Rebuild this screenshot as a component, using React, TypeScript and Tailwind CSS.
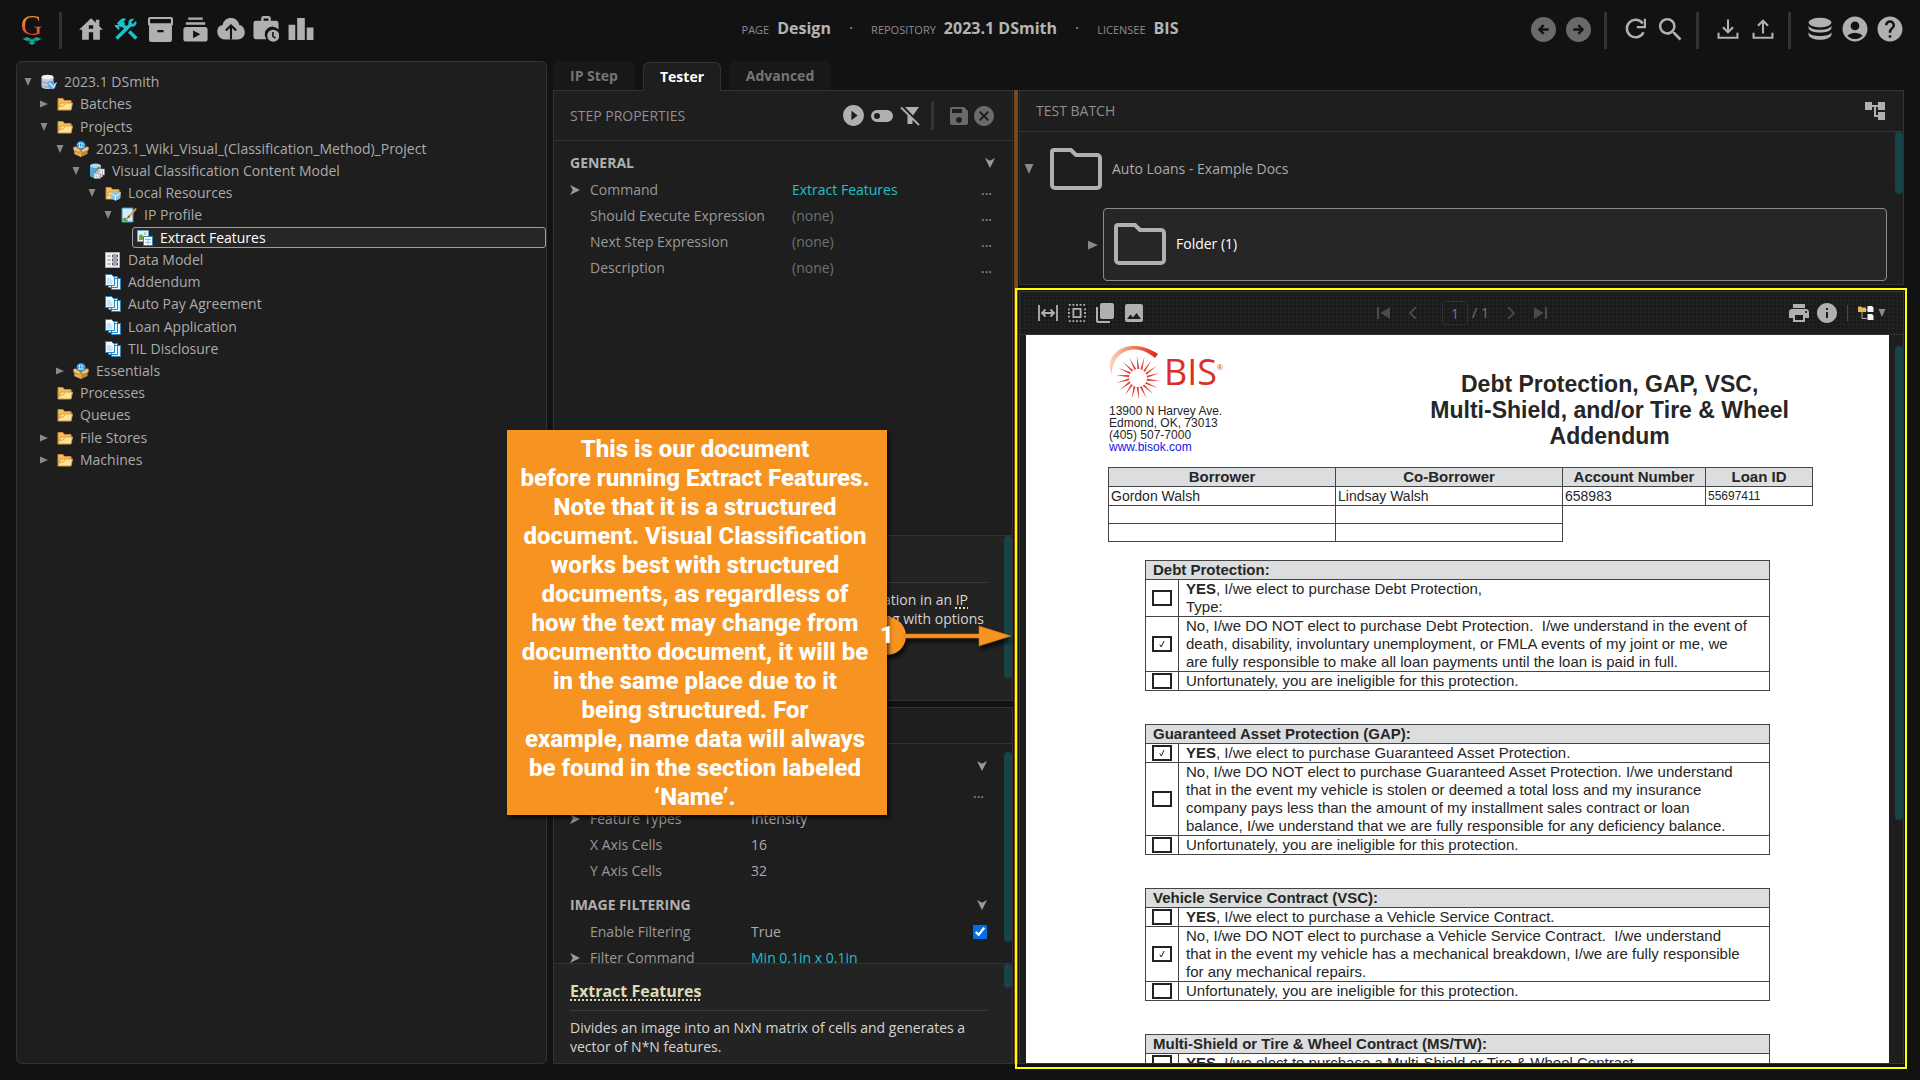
import React from "react";
import {
  MdAccountCircle,
  MdAccountTree,
  MdCancel,
  MdHelp,
  MdImage,
  MdInfo,
  MdPlayCircleFilled,
  MdPrint,
  MdSave,
  MdSearch,
  MdSubscriptions,
} from "react-icons/md";

type IconProps = { className?: string };

const svgProps = { viewBox: "0 0 24 24", fill: "currentColor", "aria-hidden": true };

/* ---------- toolbar icons ---------- */

const HomeIcon = ({ className }: IconProps) => (
  <svg {...svgProps} className={className}>
    <path
      fillRule="evenodd"
      d="M12 2 1 12.6h2.8V22H10v-7h4v7h6.2v-9.4H23l-3.3-3.2V3.4h-3.2v2.9zM10 8.6h4v3.2h-4z"
    />
  </svg>
);

const ToolsIcon = ({ className }: IconProps) => (
  <svg {...svgProps} className={className}>
    <path d="M13.78 15.3L19.78 21.3L21.89 19.14L15.89 13.14L13.78 15.3M17.5 10.1C17.11 10.1 16.69 10.05 16.36 9.91L4.97 21.25L2.86 19.14L10.27 11.74L8.5 9.96L7.78 10.66L6.33 9.25V12.11L5.63 12.81L2.11 9.25L2.81 8.55H5.62L4.22 7.14L7.78 3.58C8.95 2.41 10.83 2.41 12 3.58L9.89 5.74L11.3 7.14L10.59 7.85L12.38 9.63L14.2 7.75C14.06 7.42 14 7 14 6.63C14 4.66 15.56 3.11 17.5 3.11C18.09 3.11 18.61 3.25 19.08 3.53L16.41 6.2L17.91 7.7L20.58 5.03C20.86 5.5 21 6 21 6.63C21 8.55 19.45 10.1 17.5 10.1Z" />
  </svg>
);

const ArchiveIcon = ({ className }: IconProps) => (
  <svg {...svgProps} className={className}>
    <path
      fillRule="evenodd"
      d="M2 0h20a2 2 0 0 1 2 2v6h-1v14a2 2 0 0 1-2 2H3a2 2 0 0 1-2-2V8H0V2a2 2 0 0 1 2-2zm0 2v4h20V2zm7 10.5v2.2h6v-2.2z"
    />
  </svg>
);

const CloudUpIcon = ({ className }: IconProps) => (
  <svg {...svgProps} viewBox="0 0 28 22" className={className}>
    <path d="M14 0C9.600 0 6.200 2.700 5.700 7 2.500 7.400.300 10 .300 13.600.300 18 3.400 21.500 7.600 21.500h13c4 0 7.200-3 7.200-7.200 0-3.800-2.300-6.700-5.500-7.300C21.600 2.700 18.300 0 14 0z" />
    <path d="M14 21.500V8.500M8.800 12.600 14 7.400l5.200 5.200" fill="none" stroke="#121212" strokeWidth="2.100" />
  </svg>
);

const BriefcaseClockIcon = ({ className }: IconProps) => (
  <svg {...svgProps} viewBox="0 0 26 28" className={className}>
    <path fillRule="evenodd" d="M8 5V2.500A2.500 2.500 0 0 1 10.500 0h5A2.500 2.500 0 0 1 18 2.500V5h5.500A2.500 2.500 0 0 1 26 7.500V14a8 8 0 0 0-12.500 10H2.500A2.500 2.500 0 0 1 0 21.500v-14A2.500 2.500 0 0 1 2.500 5zm2.500 0h5V2.500h-5z" />
    <circle cx="20.500" cy="20.500" r="6.300" />
    <path d="M20.200 16.500v4.500l2.600 2" fill="none" stroke="#121212" strokeWidth="1.600" />
  </svg>
);

const BarsIcon = ({ className }: IconProps) => (
  <svg {...svgProps} viewBox="0 0 26 24" className={className}>
    <path d="M0 7h7v16H0zM9 0h8v23H9zM19 10h7v13h-7z" />
  </svg>
);

const ArrowCircleIcon = ({ className }: IconProps) => (
  <svg {...svgProps} className={className}>
    <circle cx="12" cy="12" r="12" />
    <path d="M17 12H8.500M12.200 7.800 8 12l4.200 4.200" fill="none" stroke="#121212" strokeWidth="2.200" />
  </svg>
);

const RefreshIcon = ({ className }: IconProps) => (
  <svg {...svgProps} className={className}>
    <path d="M19.500 15.200A8.700 8.700 0 1 1 18.700 6.500" fill="none" stroke="currentColor" strokeWidth="2.500" />
    <path d="M22 1.800v9.400h-9.200V9h7V1.800z" />
  </svg>
);

const DownloadIcon = ({ className }: IconProps) => (
  <svg {...svgProps} fill="none" stroke="currentColor" strokeWidth="2.300" className={className}>
    <path d="M12 1.500v14M6.500 10l5.500 5.500L17.500 10M1.700 16v5.500h20.600V16" />
  </svg>
);

const UploadIcon = ({ className }: IconProps) => (
  <svg {...svgProps} fill="none" stroke="currentColor" strokeWidth="2.300" className={className}>
    <path d="M12 17V3M6.500 8.500 12 3l5.500 5.500M1.700 16v5.500h20.600V16" />
  </svg>
);

const DatabaseIcon = ({ className }: IconProps) => (
  <svg {...svgProps} className={className}>
    <ellipse cx="12" cy="5.600" rx="11.500" ry="4.800" />
    <path d="M.5 8.800c1.500 2.700 6 4 11.500 4s10-1.300 11.500-4v2.400c-1 3-5.700 4.300-11.500 4.300S1.500 14.200.5 11.200z" />
    <path d="M.5 15.300c1.500 2.700 6 3.800 11.500 3.800s10-1.100 11.500-3.800v2.700c-1 3-5.700 4.800-11.500 4.800S1.500 21 .5 18z" />
  </svg>
);

const ToggleIcon = ({ className }: IconProps) => (
  <svg {...svgProps} viewBox="0 0 22 12" className={className}>
    <path fillRule="evenodd" d="M6 0h10a6 6 0 0 1 0 12H6A6 6 0 0 1 6 0zm0 3a3 3 0 1 0 0 6 3 3 0 0 0 0-6z" />
  </svg>
);

const FilterOffIcon = ({ className }: IconProps) => (
  <svg {...svgProps} viewBox="0 0 20 20" className={className}>
    <path d="M5 1h14l-6 8.500zM7.500 8.500l5 5V18h-5z" />
    <path d="m1 1.500 18 17.500" stroke="currentColor" strokeWidth="1.800" />
  </svg>
);

const FitWidthIcon = ({ className }: IconProps) => (
  <svg {...svgProps} viewBox="0 0 20 18" className={className}>
    <path d="M1 1v16M19 1v16M4 9h12M7.500 5.500 4 9l3.500 3.500M12.500 5.500 16 9l-3.500 3.500" fill="none" stroke="currentColor" strokeWidth="1.800" />
  </svg>
);

const SelectIcon = ({ className }: IconProps) => (
  <svg {...svgProps} viewBox="0 0 20 20" fill="none" stroke="currentColor" strokeWidth="2" className={className}>
    <path d="M1 1h18M1 19h18M1 5v10M19 5v10" strokeDasharray="2 2" />
    <path d="M6 5.500h8v9H6z" />
  </svg>
);

const PagesIcon = ({ className }: IconProps) => (
  <svg {...svgProps} viewBox="0 0 18 20" className={className}>
    <path d="M6 0h10a2 2 0 0 1 2 2v12a2 2 0 0 1-2 2H6a2 2 0 0 1-2-2V2a2 2 0 0 1 2-2z" />
    <path d="M0 4h2v14h12v2H2a2 2 0 0 1-2-2z" />
  </svg>
);

const BigFolderIcon = ({ className }: IconProps) => (
  <svg {...svgProps} viewBox="0 0 52 42" className={className}>
    <path d="M4 2h17l5 5h21a3 3 0 0 1 3 3v27a3 3 0 0 1-3 3H5a3 3 0 0 1-3-3V4a2 2 0 0 1 2-2z" fill="none" stroke="currentColor" strokeWidth="4" />
  </svg>
);

const Notch = ({ className }: IconProps) => (
  <svg viewBox="0 0 10 10" fill="#9a9a9a" aria-hidden="true" className={className}>
    <path d="M0 0 10 5 0 10 2.800 5z" />
  </svg>
);

const Caret = ({ open, className }: { open?: boolean; className?: string }) => (
  <svg viewBox="0 0 8 8" fill="#8a8a8a" aria-hidden="true" className={className}>
    {open ? <path d="M.5 0h7L4 8z" /> : <path d="M0 .5l8 3.500-8 3.500z" />}
  </svg>
);

/* ---------- tree icons ---------- */

const FolderArt = () => (
  <>
    <path d="M1 14V2.500h5l1.500 2H14V7" fill="#f2c061" stroke="#c98a35" />
    <path d="M1 14 3.500 7h12L14 14z" fill="#fbe39b" stroke="#d99a3c" />
    <path d="M3 10.500 6 10l2-2" fill="none" stroke="#e0a444" />
  </>
);

const art: Record<string, React.ReactNode> = {
  folder: <FolderArt />,
  db: (
    <>
      <path d="M.5 3v9.500c0 1.400 2.700 2.500 6 2.500s6-1.100 6-2.500V3z" fill="#c4cbd8" />
      <path d="M.5 7c1 2.500 11 2.500 12 0M.5 11c1 2.300 8 2.500 9 1.500" fill="none" stroke="#8791a5" />
      <ellipse cx="6.500" cy="3" rx="6" ry="2.300" fill="#eef1f6" />
      <ellipse cx="10.500" cy="11" rx="3.500" ry="4.500" fill="#5fa8e6" transform="rotate(-40 10.500 11)" />
      <path d="m8 9 5 4.500M12 14l3.500-5.500" stroke="#d8eaf8" strokeWidth="1.200" />
    </>
  ),
  box: (
    <>
      <path d="M1.500 8 8 6l6.500 2v5L8 16l-6.500-3z" fill="#c48a35" />
      <path d="M1.500 8 8 10.500V16l-6.500-3z" fill="#e2ad55" />
      <circle cx="8" cy="4.400" r="4.400" fill="#2f93dc" />
      <path d="M4.500 3.500 6.500 2l3 .5 2 1.500M5 6h6M6.500 2v4.500M9.500 2.500l-1.500 4" fill="none" stroke="#dff2fd" strokeWidth=".8" />
      <path d="M0 6.500 2.500 5.500 8 9.500 6 11.500.8 9.500zM16 6.500l-2.500-1L8 9.500l2 2 5.200-2z" fill="#f0c478" stroke="#9a671f" strokeWidth=".6" />
    </>
  ),
  model: (
    <>
      <path d="M1 2.500v10C1 14 3.500 15 6.500 15S12 14 12 12.500v-10z" fill="#4fa9d2" />
      <ellipse cx="6.500" cy="2.700" rx="5.500" ry="2.200" fill="#a9dcf0" />
      <path d="M9 6h6.500v6H9zM7 8h6.500v6H7zM5 10h6.500v5.500H5z" fill="#fff" stroke="#8c8c8c" strokeWidth=".7" />
      <path d="m6 7 2-1.500" stroke="#5cab3c" strokeWidth="1.500" />
      <path d="m8.500 5.500 2-1" stroke="#d8443c" strokeWidth="1.500" />
    </>
  ),
  resources: (
    <>
      <FolderArt />
      <path d="m10.500 6.500 5 2v4.500l-5 2.700-5-2.700V8.500z" fill="#8cc3ee" />
      <path d="m5.500 8.500 5 2.500 5-2.500M10.500 11v4.500" fill="none" stroke="#fff" strokeWidth=".8" />
    </>
  ),
  profile: (
    <>
      <path d="M1 1h11v14H1z" fill="#d8ebf7" stroke="#3f8fc4" />
      <path d="M1.500 14.500v-3l3-1 3 4z" fill="#65a845" />
      <path d="m5.500 12 2-3.500L14.500 1l1.300 1.200L9 10z" fill="#ef9a2f" />
      <path d="m7.500 8.500 1.500 1.600-3.500 2z" fill="#6d5030" />
    </>
  ),
  extract: (
    <>
      <path d="M.5.5h11v11H.5z" fill="#dff2fb" stroke="#5fa6cf" />
      <path d="M2 10V6l2-2 3 3 3-1v4z" fill="#6aa744" />
      <circle cx="8" cy="3.500" r="1.300" fill="#f0b73c" />
      <path d="M6.500 6.500h9v9h-9z" fill="#fff" stroke="#2f88bb" />
      <path d="M8 9.500h6M8 12.500h6M11 8v6.500" stroke="#8bbfdc" />
    </>
  ),
  data: (
    <>
      <path d="M.5.500h14v15H.5z" fill="#f2f4f8" stroke="#a5adb9" />
      <path d="M2.500 4h3M2.500 8h3M2.500 12h3" stroke="#777" />
      <path d="M7.500 3h5v2h-5zM7.500 7h5v2h-5zM7.500 11h5v2h-5z" fill="#fff" stroke="#4a5160" />
    </>
  ),
  docs: (
    <>
      <path d="M6.500 4.500h9v11h-9zM3.500 2.500h9v11h-9z" fill="#e9f5fb" stroke="#2a86bd" />
      <path d="M.5.5h6l3 3v8h-9z" fill="#f4fbfe" stroke="#2a86bd" />
      <path d="M2 5h4M2 7h5.500M2 9h5.500" stroke="#9ccbe4" />
    </>
  ),
};

type Node = { label: string; depth: number; icon: string; open?: boolean; selected?: boolean };

const nodes: Node[] = [
  { label: "2023.1 DSmith", depth: 0, icon: "db", open: true },
  { label: "Batches", depth: 1, icon: "folder", open: false },
  { label: "Projects", depth: 1, icon: "folder", open: true },
  { label: "2023.1_Wiki_Visual_(Classification_Method)_Project", depth: 2, icon: "box", open: true },
  { label: "Visual Classification Content Model", depth: 3, icon: "model", open: true },
  { label: "Local Resources", depth: 4, icon: "resources", open: true },
  { label: "IP Profile", depth: 5, icon: "profile", open: true },
  { label: "Extract Features", depth: 6, icon: "extract", selected: true },
  { label: "Data Model", depth: 4, icon: "data" },
  { label: "Addendum", depth: 4, icon: "docs" },
  { label: "Auto Pay Agreement", depth: 4, icon: "docs" },
  { label: "Loan Application", depth: 4, icon: "docs" },
  { label: "TIL Disclosure", depth: 4, icon: "docs" },
  { label: "Essentials", depth: 2, icon: "box", open: false },
  { label: "Processes", depth: 1, icon: "folder" },
  { label: "Queues", depth: 1, icon: "folder" },
  { label: "File Stores", depth: 1, icon: "folder", open: false },
  { label: "Machines", depth: 1, icon: "folder", open: false },
];

/* ---------- header ---------- */

const Separator = ({ className = "" }: IconProps) => <span className={`mt-[3px] h-[37px] w-[3px] shrink-0 bg-[#333] ${className}`} />;

const IconButton = ({ label, className = "", children }: { label: string; className?: string; children: React.ReactNode }) => (
  <button type="button" aria-label={label} className={`flex shrink-0 items-center justify-center ${className}`}>
    {children}
  </button>
);

const NavButton = ({ label, className = "", children }: { label: string; className?: string; children: React.ReactNode }) => (
  <IconButton label={label} className={`w-[35px] ${className}`}>{children}</IconButton>
);

const Crumb = ({ name, value }: { name: string; value: string }) => (
  <span className="flex items-baseline gap-2">
    <span className="text-[11px] text-[#8c8c8c]">{name}</span>
    <span className="text-base font-bold text-[#b4b4b4]">{value}</span>
  </span>
);

const Header = () => (
  <header className="grid h-[61px] shrink-0 grid-cols-[1fr_auto_1fr] items-start px-[13px] pt-[9px] text-[#b0b0b0]">
    <div className="flex items-center pl-2">
      <a href="#home" aria-label="Grooper" className="flex w-[21px] flex-col items-center">
        <span className="bg-gradient-to-b from-[#f7a11c] to-[#e8252c] bg-clip-text font-['Liberation_Serif',serif] text-[30px] leading-6 text-transparent">
          G
        </span>
        <svg viewBox="0 0 20 8" fill="#10a79a" aria-hidden="true" className="h-2 w-5">
          <path d="M5 0l4.500 2L5 4 .500 2zM15 0l4.500 2L15 4l-4.500-2zM10 2l4 2-4 2-4-2zM10 5.300l4 .700-4 2-4-2z" />
        </svg>
      </a>
      <Separator className="ml-[17px] mr-[11px]" />
      <nav className="flex items-center">
        <NavButton label="Home"><HomeIcon className="size-[26px]" /></NavButton>
        <NavButton label="Design" className="text-[#1fc0cc]"><ToolsIcon className="size-7" /></NavButton>
        <NavButton label="Batches"><ArchiveIcon className="size-[25px]" /></NavButton>
        <NavButton label="Tasks"><MdSubscriptions className="size-[29px]" /></NavButton>
        <NavButton label="Imports"><CloudUpIcon className="h-[22px] w-7" /></NavButton>
        <NavButton label="Jobs"><BriefcaseClockIcon className="h-[27px] w-[26px]" /></NavButton>
        <NavButton label="Stats"><BarsIcon className="h-[23px] w-[26px]" /></NavButton>
      </nav>
    </div>

    <div className="flex gap-[18px] pt-[7px]">
      <Crumb name="PAGE" value="Design" />
      <span className="text-[#8c8c8c]">·</span>
      <Crumb name="REPOSITORY" value="2023.1 DSmith" />
      <span className="text-[#8c8c8c]">·</span>
      <Crumb name="LICENSEE" value="BIS" />
    </div>

    <div className="flex items-center justify-end">
      <NavButton label="Back" className="text-[#6a6a6a]"><ArrowCircleIcon className="size-[25px]" /></NavButton>
      <NavButton label="Forward" className="text-[#6a6a6a]"><ArrowCircleIcon className="size-[25px] rotate-180" /></NavButton>
      <Separator className="ml-2 mr-[11px]" />
      <NavButton label="Refresh"><RefreshIcon className="size-6" /></NavButton>
      <NavButton label="Search"><MdSearch className="size-[31px]" /></NavButton>
      <Separator className="ml-2 mr-[11px]" />
      <NavButton label="Download"><DownloadIcon className="size-[22px]" /></NavButton>
      <NavButton label="Upload"><UploadIcon className="size-[22px]" /></NavButton>
      <Separator className="ml-2 mr-[11px]" />
      <NavButton label="Repository"><DatabaseIcon className="size-6" /></NavButton>
      <NavButton label="Account"><MdAccountCircle className="size-[30px]" /></NavButton>
      <NavButton label="Help"><MdHelp className="size-[30px]" /></NavButton>
    </div>
  </header>
);

const NodeTree = () => (
  <aside className="w-[531px] shrink-0 overflow-hidden rounded-md border border-[#333] bg-[#1e1e1e] pt-[9px]">
    <ul className="grid h-[400px] auto-rows-fr text-sm">
      {nodes.map((n) => (
        <li key={n.label} className="flex items-center" style={{ paddingLeft: 7 + n.depth * 16 }}>
          <span className="mr-1 w-2">{n.open !== undefined && <Caret open={n.open} className="size-2" />}</span>
          <button
            type="button"
            className={`flex h-[21px] flex-1 items-center gap-[7px] whitespace-nowrap rounded-[3px] border pl-1 text-left ${
              n.selected ? "border-[#a0a0a0] bg-[#262626] text-white" : "border-transparent text-[#ababab]"
            }`}
          >
            <svg viewBox="0 0 16 16" aria-hidden="true" className="size-4 shrink-0">{art[n.icon]}</svg>
            {n.label}
          </button>
        </li>
      ))}
    </ul>
  </aside>
);

/* ---------- property grids ---------- */

type Row = { label: string; value: string; expand?: boolean; tone?: "link" | "muted"; more?: boolean; check?: boolean };

const stepRows: Row[] = [
  { label: "Command", value: "Extract Features", expand: true, tone: "link", more: true },
  { label: "Should Execute Expression", value: "(none)", tone: "muted", more: true },
  { label: "Next Step Expression", value: "(none)", tone: "muted", more: true },
  { label: "Description", value: "(none)", tone: "muted", more: true },
];

const featureRows: Row[] = [
  { label: "", value: "", more: true },
  { label: "Feature Types", value: "Intensity", expand: true },
  { label: "X Axis Cells", value: "16" },
  { label: "Y Axis Cells", value: "32" },
];

const filterRows: Row[] = [
  { label: "Enable Filtering", value: "True", check: true },
  { label: "Filter Command", value: "Min 0.1in x 0.1in", expand: true, tone: "link" },
];

const tones = { link: "text-[#1fc0cc]", muted: "text-[#707070]", plain: "text-[#ababab]" };

const Group = ({ title, rows, labelWidth }: { title?: string; rows: Row[]; labelWidth: string }) => (
  <section className="pb-[7px]">
    <h3 className="flex h-7 items-center text-sm font-bold text-[#b0b0b0]">
      <span className="flex-1">{title}</span>
      <Notch className="size-[10px] rotate-90" />
    </h3>
    {rows.map((r) => (
      <div key={r.label} className="flex h-[26px] items-center text-sm">
        <span className="w-5">{r.expand && <Notch className="size-[10px]" />}</span>
        <span className={`${labelWidth} text-[#999]`}>{r.label}</span>
        <span className={`flex-1 ${tones[r.tone ?? "plain"]}`}>{r.value}</span>
        {r.more && <button type="button" aria-label={`Edit ${r.label}`} className="pr-[3px] text-[#999]">...</button>}
        {r.check && <input type="checkbox" defaultChecked aria-label={r.label} className="size-[14px] accent-[#0070ea]" />}
      </div>
    ))}
  </section>
);

const Thumb = ({ className }: IconProps) => <span className={`absolute right-0 w-2 rounded bg-[#164448] ${className}`} />;

const Term = ({ children }: { children: React.ReactNode }) => (
  <a href="#help" className="text-[#dcdcb8] underline decoration-dotted decoration-2 underline-offset-2">{children}</a>
);

const Callout = () => (
  <div className="absolute -left-[46px] top-[369px] z-20 w-[380px]">
    <svg viewBox="0 0 150 44" aria-hidden="true" className="absolute left-[359px] top-[184px] h-11 w-[150px] overflow-visible drop-shadow-[2px_4px_2px_rgba(0,0,0,0.7)]">
      <circle cx="21" cy="22" r="19" fill="#f79321" />
      <path d="M38 20h75v-8l32 10-32 10v-8H38z" fill="#f79321" stroke="#c9741a" strokeWidth=".6" />
    </svg>
    <p className="relative bg-[#f79321] pt-[5px] pr-1 pb-[3px] text-center font-['Roboto',sans-serif] text-2xl leading-[29px] font-extrabold whitespace-nowrap text-white shadow-[2px_3px_4px_rgba(0,0,0,0.7)]">
      This is our document<br />
      before running Extract Features.<br />
      Note that it is a structured<br />
      document. Visual Classification<br />
      works best with structured<br />
      documents, as regardless of<br />
      how the text may change from<br />
      documentto document, it will be<br />
      in the same place due to it<br />
      being structured. For<br />
      example, name data will always<br />
      be found in the section labeled<br />
      ‘Name’.
    </p>
    <span className="absolute left-[373px] top-[191px] font-['Roboto',sans-serif] text-2xl leading-[29px] font-extrabold text-white">1</span>
  </div>
);

const StepColumn = () => (
  <div className="relative flex w-[460px] shrink-0 flex-col">
    <div role="tablist" className="flex h-[30px] shrink-0 gap-2 text-sm font-bold">
      <button role="tab" type="button" className="mb-px w-[82px] rounded-t-md bg-[#181818] text-[#757575]">IP Step</button>
      <button role="tab" type="button" aria-selected="true" className="relative z-10 mt-px w-[78px] rounded-t-md border border-b-0 border-[#333] bg-[#1e1e1e] text-white">
        Tester
      </button>
      <button role="tab" type="button" className="mb-px w-[102px] rounded-t-md bg-[#181818] text-[#757575]">Advanced</button>
    </div>

    <section className="-mt-px flex h-[611px] shrink-0 flex-col border border-[#333] bg-[#1e1e1e]">
      <div className="flex h-[50px] shrink-0 items-center border-b border-[#333] pl-4 pr-[18px] text-[#b0b0b0]">
        <h2 className="flex-1 text-sm text-[#8f8f8f]">STEP PROPERTIES</h2>
        <div className="flex items-center gap-[7px]">
          <IconButton label="Execute"><MdPlayCircleFilled className="-mx-0.5 size-[25px]" /></IconButton>
          <IconButton label="Toggle"><ToggleIcon className="h-3 w-[22px]" /></IconButton>
          <IconButton label="Clear filter"><FilterOffIcon className="size-5" /></IconButton>
          <span className="mx-1 h-[29px] w-[3px] bg-[#333]" />
          <IconButton label="Save" className="ml-0.5 text-[#6a6a6a]"><MdSave className="size-6" /></IconButton>
          <IconButton label="Cancel" className="-ml-1.5 text-[#6a6a6a]"><MdCancel className="-mr-0.5 size-6" /></IconButton>
        </div>
      </div>
      <div className="flex-1 pl-4 pr-[17px] pt-2">
        <Group title="GENERAL" rows={stepRows} labelWidth="w-[202px]" />
      </div>
      <div className="relative h-[165px] shrink-0 border-t border-[#333] bg-[#232323] px-4 text-sm leading-[19px] text-[#d4d4d4]">
        <Thumb className="top-0 h-[142px]" />
        <div className="mr-2 h-[47px] border-b border-[#3a3a3a]" />
        <p className="pr-3 pt-[7px] text-right whitespace-nowrap">
          <span className="mr-4">operation in an <Term>IP</Term></span><br />
          processing with options
        </p>
      </div>
    </section>

    <section className="mt-1.5 flex min-h-0 flex-1 flex-col border border-[#333] bg-[#1e1e1e]">
      <div className="h-9 shrink-0 border-b border-[#333]" />
      <div className="relative min-h-0 flex-1 overflow-hidden pl-4 pr-[25px] pt-2">
        <Thumb className="top-2 h-[190px]" />
        <Group rows={featureRows} labelWidth="w-[161px]" />
        <Group title="IMAGE FILTERING" rows={filterRows} labelWidth="w-[161px]" />
      </div>
      <div className="relative h-[100px] shrink-0 border-t border-[#333] bg-[#232323] px-4 text-sm leading-[19px] text-[#d4d4d4]">
        <Thumb className="top-0 h-6" />
        <h3 className="mr-2 flex h-[47px] items-center border-b border-[#3a3a3a] pt-2 text-base leading-5 font-bold">
          <Term>Extract Features</Term>
        </h3>
        <p className="pr-2 pt-[7px]">Divides an image into an NxN matrix of cells and generates a vector of N*N features.</p>
      </div>
    </section>
    <Callout />
  </div>
);

/* ---------- batch + document viewer ---------- */

const TestBatch = () => (
  <section className="h-[195px] shrink-0 overflow-hidden border border-[#333] bg-[#1e1e1e] text-sm">
    <div className="flex h-[41px] items-center justify-between border-b border-[#333] pl-4 pr-4">
      <h2 className="text-[#8f8f8f]">TEST BATCH</h2>
      <IconButton label="Batch tree" className="text-[#b0b0b0]"><MdAccountTree className="size-6" /></IconButton>
    </div>
    <div className="relative flex flex-col gap-0.5 pr-4">
      <Thumb className="top-0 h-[62px]" />
      <div className="flex h-[74px] items-center pl-1 text-[#ababab]">
        <Caret open className="size-[10px]" />
        <BigFolderIcon className="ml-4 mr-[10px] h-[42px] w-[52px] text-[#b0b0b0]" />
        Auto Loans - Example Docs
      </div>
      <div className="flex items-center pl-[68px]">
        <Caret className="size-[10px]" />
        <button type="button" className="ml-[5px] flex h-[73px] flex-1 items-center gap-[10px] rounded border border-[#8a8a8a] bg-[#262626] pb-0.5 pl-[10px] text-white">
          <BigFolderIcon className="h-[42px] w-[52px] text-[#b0b0b0]" />
          Folder (1)
        </button>
      </div>
    </div>
  </section>
);

const ViewerBar = () => (
  <div className="grid h-[43px] shrink-0 grid-cols-[1fr_auto_1fr] items-center border-b border-[#333] bg-[#1a1a1a] bg-[linear-gradient(#212121_1px,transparent_1px),linear-gradient(90deg,#212121_1px,transparent_1px)] bg-size-[4px_4px] pl-[18px] pr-[17px] text-[#b0b0b0]">
    <div className="flex items-center gap-[9px]">
      <IconButton label="Fit width"><FitWidthIcon className="h-[18px] w-5" /></IconButton>
      <IconButton label="Select"><SelectIcon className="h-[18px] w-5" /></IconButton>
      <IconButton label="Pages"><PagesIcon className="h-5 w-[18px]" /></IconButton>
      <IconButton label="Image" className="-ml-px"><MdImage className="size-6" /></IconButton>
    </div>
    <div className="flex items-center gap-[18px] text-sm text-[#777]">
      <IconButton label="First page">
        <svg viewBox="0 0 14 12" fill="#4a4a4a" className="h-3 w-[14px]"><path d="M0 0h2v12H0zM13 0v12L3.500 6z" /></svg>
      </IconButton>
      <IconButton label="Previous page">
        <svg viewBox="0 0 8 12" fill="none" stroke="#4a4a4a" strokeWidth="1.800" className="h-3 w-2"><path d="M7 0 1 6l6 6" /></svg>
      </IconButton>
      <label className="ml-[7px] flex items-center gap-1">
        <input aria-label="Page number" defaultValue="1" className="h-6 w-[26px] rounded border border-[#303030] bg-transparent text-center" />
        / 1
      </label>
      <IconButton label="Next page">
        <svg viewBox="0 0 8 12" fill="none" stroke="#4a4a4a" strokeWidth="1.800" className="h-3 w-2"><path d="m1 0 6 6-6 6" /></svg>
      </IconButton>
      <IconButton label="Last page">
        <svg viewBox="0 0 14 12" fill="#4a4a4a" className="h-3 w-[14px]"><path d="M12 0h2v12h-2zM1 0v12l9.500-6z" /></svg>
      </IconButton>
    </div>
    <div className="flex items-center justify-end gap-1">
      <IconButton label="Print"><MdPrint className="size-6" /></IconButton>
      <IconButton label="Info"><MdInfo className="size-6" /></IconButton>
      <span className="ml-1 mr-1.5 h-4 w-px bg-[#4a4a4a]" />
      <IconButton label="Layers" className="gap-1">
        <svg viewBox="0 0 16 16" aria-hidden="true" className="size-4">
          <path d="M0 1.500h3l1 1h4V7H0z" fill="#f0b64e" />
          <path d="M4 7v6.500h5M8 5h2" fill="none" stroke="#a8a8a8" />
          <path d="M9.500 1H14l1.500 1.500V7h-6zM9.500 9H14l1.500 1.500V15h-6z" fill="#f4f4f4" />
        </svg>
        <Caret open className="size-2" />
      </IconButton>
    </div>
  </div>
);

const rayAngles = Array.from({ length: 18 }, (_, i) => i * 20);

const BisLogo = () => (
  <div className="flex h-[54px] items-center">
    <svg viewBox="0 0 52 54" fill="none" aria-hidden="true" className="h-[54px] w-[52px] shrink-0">
      <defs>
        <linearGradient id="bisArc" x1="0" x2="1">
          <stop offset="0" stopColor="#f9d5bd" />
          <stop offset=".5" stopColor="#ee7d5c" />
          <stop offset="1" stopColor="#d9201f" />
        </linearGradient>
      </defs>
      <path d="M4 30C-6 8 22-10 50 9l-3 4C26-5 3 8 4 30z" fill="url(#bisArc)" />
      {rayAngles.map((a) => (
        <path key={a} d="M29.300 24 28.800 11l2.600 13z" fill="#d9423a" transform={`rotate(${a} 30 33)`} />
      ))}
    </svg>
    <span className="ml-1 text-[36px] leading-none text-[#dc2f2a] font-['Open_Sans',sans-serif]">BIS</span>
    <sup className="text-[8px] text-[#dc2f2a]">®</sup>
  </div>
);

type Choice = { checked?: boolean; body: React.ReactNode };

const Unfortunately = "Unfortunately, you are ineligible for this protection.";

const elections: { title: string; choices: Choice[] }[] = [
  {
    title: "Debt Protection:",
    choices: [
      { body: <><b>YES</b>, I/we elect to purchase Debt Protection,<br />Type:</> },
      {
        checked: true,
        body: (
          <>
            No, I/we DO NOT elect to purchase Debt Protection.&nbsp; I/we understand in the event of<br />
            death, disability, involuntary unemployment, or FMLA events of my joint or me, we<br />
            are fully responsible to make all loan payments until the loan is paid in full.
          </>
        ),
      },
      { body: Unfortunately },
    ],
  },
  {
    title: "Guaranteed Asset Protection (GAP):",
    choices: [
      { checked: true, body: <><b>YES</b>, I/we elect to purchase Guaranteed Asset Protection.</> },
      {
        body: (
          <>
            No, I/we DO NOT elect to purchase Guaranteed Asset Protection. I/we understand<br />
            that in the event my vehicle is stolen or deemed a total loss and my insurance<br />
            company pays less than the amount of my installment sales contract or loan<br />
            balance, I/we understand that we are fully responsible for any deficiency balance.
          </>
        ),
      },
      { body: Unfortunately },
    ],
  },
  {
    title: "Vehicle Service Contract (VSC):",
    choices: [
      { body: <><b>YES</b>, I/we elect to purchase a Vehicle Service Contract.</> },
      {
        checked: true,
        body: (
          <>
            No, I/we DO NOT elect to purchase a Vehicle Service Contract.&nbsp; I/we understand<br />
            that in the event my vehicle has a mechanical breakdown, I/we are fully responsible<br />
            for any mechanical repairs.
          </>
        ),
      },
      { body: Unfortunately },
    ],
  },
  {
    title: "Multi-Shield or Tire & Wheel Contract (MS/TW):",
    choices: [{ body: <><b>YES</b>, I/we elect to purchase a Multi-Shield or Tire & Wheel Contract.</> }],
  },
];

const cell = "border border-[#444] px-0.5";

const DocumentPage = () => (
  <article className="min-w-0 flex-1 overflow-hidden bg-white pl-[82px] pr-[76px] pt-[10px] font-['Liberation_Sans',Arial,sans-serif] text-[15px] leading-[18px] text-[#262626]">
    <div className="flex h-[122px] justify-between">
      <div>
        <BisLogo />
        <address className="mt-1.5 pl-px text-xs leading-3 whitespace-nowrap not-italic">
          13900 N Harvey Ave.<br />
          Edmond, OK, 73013<br />
          (405) 507-7000<br />
          <a href="http://www.bisok.com" className="text-[#1414e6]">www.bisok.com</a>
        </address>
      </div>
      <h1 className="pr-6 pt-[26px] text-center text-[23px] leading-[26px] font-bold whitespace-nowrap">
        Debt Protection, GAP, VSC,<br />
        Multi-Shield, and/or Tire &amp; Wheel<br />
        Addendum
      </h1>
    </div>

    <table className="w-full table-fixed border-collapse">
      <colgroup>
        <col className="w-[227px]" />
        <col className="w-[227px]" />
        <col className="w-[143px]" />
        <col />
      </colgroup>
      <thead>
        <tr className="bg-[#dcddde]">
          {["Borrower", "Co-Borrower", "Account Number", "Loan ID"].map((h) => (
            <th key={h} className="border border-[#444] px-0 font-bold whitespace-nowrap">{h}</th>
          ))}
        </tr>
      </thead>
      <tbody className="text-sm leading-[18px]">
        <tr>
          <td className={cell}>Gordon Walsh</td>
          <td className={cell}>Lindsay Walsh</td>
          <td className={cell}>658983</td>
          <td className={`${cell} text-xs leading-[18px]`}>55697411</td>
        </tr>
        {[0, 1].map((i) => (
          <tr key={i} className="h-[18px]">
            <td className={cell} />
            <td className={cell} />
          </tr>
        ))}
      </tbody>
    </table>

    <div className="flex flex-col gap-[33px] pl-[37px] pr-[43px] pt-[18px]">
      {elections.map((e, ei) => (
        <table key={e.title} className="w-full border-collapse whitespace-nowrap">
          <thead>
            <tr>
              <th colSpan={2} className="border border-[#444] bg-[#dcddde] px-[7px] text-left font-bold">{e.title}</th>
            </tr>
          </thead>
          <tbody>
            {e.choices.map((c, i) => (
              <tr key={i}>
                <td className="w-[33px] border border-[#444] p-0">
                  <label className="relative mx-auto block h-4 w-5">
                    <input
                      type="checkbox"
                      defaultChecked={c.checked}
                      aria-label={`${e.title} option ${i + 1}`}
                      name={`election-${ei}-${i}`}
                      className="peer block h-4 w-5 appearance-none border-2 border-[#222]"
                    />
                    <svg viewBox="0 0 6 8" fill="none" stroke="#222" aria-hidden="true" className="absolute left-[7px] top-1 hidden h-2 w-1.5 peer-checked:block">
                      <path d="M.8 4.500 2.300 7 5 1" />
                    </svg>
                  </label>
                </td>
                <td className="border border-[#444] py-0 pl-[7px] pr-0">{c.body}</td>
              </tr>
            ))}
          </tbody>
        </table>
      ))}
    </div>
  </article>
);

export default function App() {
  return (
    <div className="flex h-screen flex-col overflow-hidden bg-[#121212] pb-4 font-['Open_Sans',sans-serif]">
      <Header />
      <main className="flex min-h-0 flex-1 gap-[6px] pl-4 pr-4">
        <NodeTree />
        <div className="flex min-w-0 flex-1">
          <StepColumn />
          <div className="mt-[29px] ml-px mr-px w-1 bg-[#7d4a20]" />
          <div className="mt-[29px] flex min-w-0 flex-1 flex-col">
            <TestBatch />
            <div className="relative mt-[6px] flex min-h-0 flex-1 flex-col">
              <section className="flex min-h-0 flex-1 flex-col border border-[#333] bg-[#1e1e1e]">
                <ViewerBar />
                <div className="relative flex min-h-0 flex-1 pl-1.5 pr-[14px]">
                  <DocumentPage />
                  <Thumb className="top-[11px] h-[474px]" />
                </div>
              </section>
              <div className="pointer-events-none absolute -left-1 -right-[3px] -top-[3px] -bottom-[5px] z-10 border-2 border-[#ffff00]" />
            </div>
          </div>
        </div>
      </main>
    </div>
  );
}
